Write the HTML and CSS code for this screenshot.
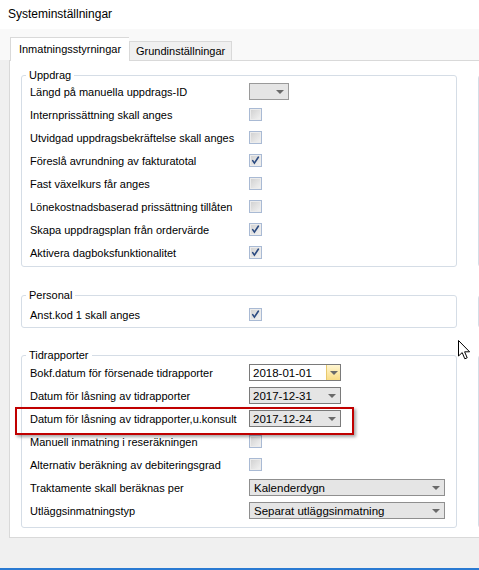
FILE: index.html
```html
<!DOCTYPE html>
<html lang="sv">
<head>
  <meta charset="UTF-8">
  <title>Systeminställningar</title>
  <link rel="stylesheet" href="styles.css">
</head>
<body>
  <div class="titlebar">Systeminställningar</div>

  <div class="window">
    <div class="tabs">
      <div class="tab active">Inmatningsstyrningar</div>
      <div class="tab">Grundinställningar</div>
    </div>

    <div class="panel">
      <!-- Uppdrag -->
      <div class="section">
        <fieldset class="group uppdrag">
          <legend>Uppdrag</legend>
          <div class="row"><span class="label">Längd på manuella uppdrags-ID</span><span class="combo short"><span></span><i class="arrow"></i></span></div>
          <div class="row"><span class="label">Internprissättning skall anges</span><span class="cb"></span></div>
          <div class="row"><span class="label">Utvidgad uppdragsbekräftelse skall anges</span><span class="cb"></span></div>
          <div class="row"><span class="label">Föreslå avrundning av fakturatotal</span><span class="cb checked"><svg viewBox="0 0 13 13"><path d="M3.2 6.6 L5.2 9.6 L9.8 2.6"/></svg></span></div>
          <div class="row"><span class="label">Fast växelkurs får anges</span><span class="cb"></span></div>
          <div class="row"><span class="label">Lönekostnadsbaserad prissättning tillåten</span><span class="cb"></span></div>
          <div class="row"><span class="label">Skapa uppdragsplan från ordervärde</span><span class="cb checked"><svg viewBox="0 0 13 13"><path d="M3.2 6.6 L5.2 9.6 L9.8 2.6"/></svg></span></div>
          <div class="row"><span class="label">Aktivera dagboksfunktionalitet</span><span class="cb checked"><svg viewBox="0 0 13 13"><path d="M3.2 6.6 L5.2 9.6 L9.8 2.6"/></svg></span></div>
        </fieldset>
        <div class="ghost"></div>
      </div>

      <!-- Personal -->
      <div class="section personal-section">
        <fieldset class="group personal">
          <legend>Personal</legend>
          <div class="row"><span class="label">Anst.kod 1 skall anges</span><span class="cb checked"><svg viewBox="0 0 13 13"><path d="M3.2 6.6 L5.2 9.6 L9.8 2.6"/></svg></span></div>
        </fieldset>
        <div class="ghost"></div>
      </div>

      <!-- Tidrapporter -->
      <div class="section tid-section">
        <fieldset class="group tid">
          <legend>Tidrapporter</legend>
          <div class="row"><span class="label">Bokf.datum för försenade tidrapporter</span><span class="combo date open"><span>2018-01-01</span><span class="dropbtn"><i class="arrow"></i></span></span></div>
          <div class="row"><span class="label">Datum för låsning av tidrapporter</span><span class="combo date"><span>2017-12-31</span><i class="arrow"></i></span></div>
          <div class="row marked"><span class="label">Datum för låsning av tidrapporter,u.konsult</span><span class="combo date"><span>2017-12-24</span><i class="arrow"></i></span><div class="highlight"></div></div>
          <div class="row"><span class="label">Manuell inmatning i reseräkningen</span><span class="cb"></span></div>
          <div class="row"><span class="label">Alternativ beräkning av debiteringsgrad</span><span class="cb"></span></div>
          <div class="row"><span class="label">Traktamente skall beräknas per</span><span class="combo wide"><span>Kalenderdygn</span><i class="arrow"></i></span></div>
          <div class="row"><span class="label">Utläggsinmatningstyp</span><span class="combo wide"><span>Separat utläggsinmatning</span><i class="arrow"></i></span></div>
        </fieldset>
        <div class="ghost"></div>
      </div>
    </div>
  </div>

  <div class="statusbar"></div>

  <svg class="cursor" width="13" height="21" viewBox="0 0 13 21">
    <path d="M0.5 0.5 L0.5 16 L4.2 12.6 L6.8 18.8 L9.2 17.8 L6.6 11.8 L11.6 11.8 Z" fill="#fff" stroke="#000" stroke-width="1" stroke-linejoin="miter"/>
  </svg>
</body>
</html>
```

FILE: styles.css
```css
body {
  margin: 0;
  width: 479px;
  height: 570px;
  overflow: hidden;
  position: relative;
  background: #ffffff;
  font-family: "Liberation Sans", Arial, sans-serif;
  font-size: 11px;
  color: #000;
}

.titlebar {
  height: 29px;
  line-height: 29px;
  padding-left: 8px;
  font-size: 12px;
  background: #ffffff;
}

.window {
  height: 539px;
  background: #f0f0f0;
}

/* tabs */
.tabs {
  display: flex;
  align-items: flex-end;
  height: 31px;
  padding-left: 10px;
  background: #f9f9f9;
  box-sizing: border-box;
}

.tab {
  height: 19px;
  line-height: 18px;
  padding: 0 6px;
  border: 1px solid #d9d9d9;
  border-bottom: none;
  background: #f0f0f0;
  box-sizing: border-box;
  font-size: 11px;
}

.tab.active {
  position: relative;
  z-index: 1;
  width: 119px;
  height: 24px;
  line-height: 22px;
  margin-bottom: -1px;
  background: #ffffff;
  border-right: none;
  text-align: center;
}

/* panel */
.panel {
  margin-left: 9px;
  height: 478px;
  padding: 9px 0 0 11px;
  border: 1px solid #d9d9d9;
  border-right: none;
  background: #ffffff;
  box-sizing: border-box;
  overflow: hidden;
}

.section {
  display: flex;
  gap: 21px;
}

.personal-section {
  margin-top: 23px;
}

.tid-section {
  margin-top: 22px;
}

.group {
  flex-shrink: 0;
  width: 436px;
  margin: 0;
  padding: 0;
  border: 1px solid #d5dde6;
  border-radius: 3px;
  box-sizing: border-box;
}

.group legend {
  margin-left: 4px;
  padding: 0 3px;
  line-height: 10px;
  font-size: 11px;
}

.uppdrag { padding-bottom: 2px; }
.personal { padding: 3px 0 1px; }
.tid { padding: 1px 0 5px; }

.ghost {
  flex-shrink: 0;
  width: 436px;
  margin-top: 5px;
  border: 1px solid #d5dde6;
  border-radius: 3px;
}

/* rows */
.row {
  display: flex;
  align-items: center;
  height: 23px;
  padding-left: 8px;
}

.label {
  width: 219px;
  flex-shrink: 0;
  white-space: nowrap;
  font-size: 11px;
}

.marked {
  position: relative;
}

.highlight {
  position: absolute;
  left: -7px;
  top: 0;
  width: 339px;
  height: 28px;
  border: 2px solid #c00000;
  box-sizing: border-box;
  box-shadow: 2px 2px 3px rgba(0, 0, 0, 0.35);
  z-index: 2;
}

/* checkbox */
.cb {
  width: 13px;
  height: 13px;
  border: 1px solid #a9bad4;
  box-sizing: border-box;
  background: linear-gradient(135deg, #cfcfcf, #f4f4f4);
  box-shadow: inset 0 0 0 1px #ececec;
}

.cb svg {
  display: block;
  width: 11px;
  height: 11px;
}

.cb path {
  fill: none;
  stroke: #2b4a80;
  stroke-width: 1.9;
  stroke-linecap: round;
}

/* combos */
.combo {
  display: flex;
  align-items: center;
  justify-content: space-between;
  height: 17px;
  padding: 0 4px 0 5px;
  border: 1px solid #8f8f8f;
  background: #e5e5e5;
  box-sizing: border-box;
  font-size: 11.5px;
}

.combo.short {
  width: 40px;
  border-color: #9a9a9a;
}

.combo.date {
  width: 92px;
  padding-left: 3px;
  border-color: #7a7a7a;
}

.combo.wide {
  width: 196px;
  padding-left: 4px;
}

.combo.open {
  padding-right: 0;
  background: #ffffff;
}

.dropbtn {
  display: flex;
  align-items: center;
  justify-content: center;
  width: 13px;
  height: 15px;
  border-left: 1px solid #e8c96e;
  background: linear-gradient(#fff6d2, #f9dc85);
}

.arrow {
  width: 0;
  height: 0;
  border-left: 4px solid transparent;
  border-right: 4px solid transparent;
  border-top: 4px solid #6a6a6a;
}

.statusbar {
  height: 2px;
  background: #2a7ad2;
}

.cursor {
  position: absolute;
  left: 458px;
  top: 340px;
}
```
